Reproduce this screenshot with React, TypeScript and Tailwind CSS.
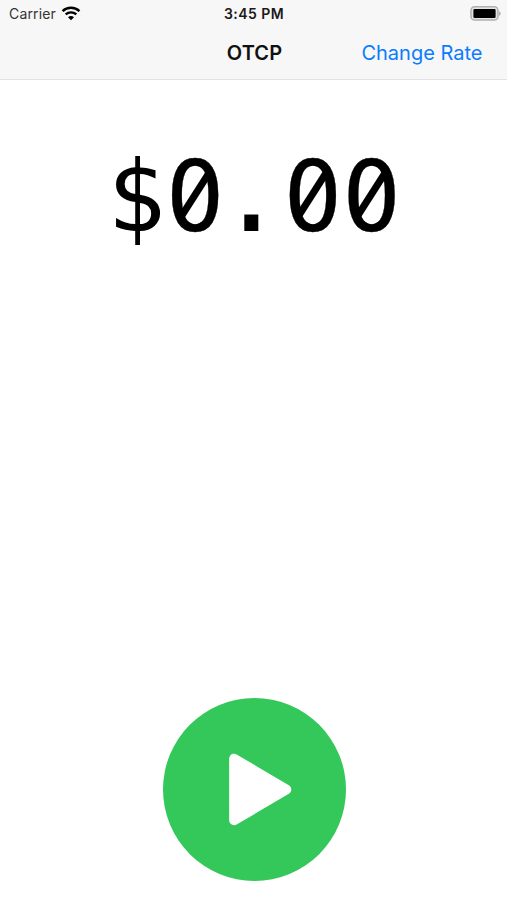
import React from 'react';

const WifiIcon: React.FC = () => (
  <svg width="20" height="15" viewBox="0 0 20 15" fill="none" className="ml-[5px]">
    <path d="M1.6 5.1C6.2.6 13.8.6 18.4 5.1" stroke="#000" strokeWidth="2.5" />
    <path d="M4.7 8.4C7.6 5.6 12.4 5.6 15.3 8.4" stroke="#000" strokeWidth="2.3" />
    <path d="M10 14.2L7 11.2C8.7 9.6 11.3 9.6 13 11.2Z" fill="#000" />
  </svg>
);

const BatteryIcon: React.FC = () => (
  <svg width="32" height="15" viewBox="0 0 32 15">
    <rect x="1" y="0.8" width="27" height="13.2" rx="3.6" fill="#e4e4e4" stroke="#b0b0b0" strokeWidth="1.5" />
    <rect x="3.4" y="2.9" width="22.2" height="9" rx="1.2" fill="#000" />
    <path d="M29 5.2C31.2 6 31.2 9 29 9.8Z" fill="#b0b0b0" />
  </svg>
);

// Zero with a diagonal slash through the counter
const Zero: React.FC = () => (
  <span className="relative [-webkit-text-stroke:0.3px_#000]">
    0
    <svg width="59" height="76" viewBox="0 0 59 76" className="absolute left-0 top-[18px]">
      <ellipse cx="29.3" cy="38" rx="9.5" ry="18" fill="#fff" />
      <path d="M15.2 58.5L43 15" stroke="#000" strokeWidth="7" />
    </svg>
  </span>
);

export default function App() {
  return (
    <div className="flex h-[900px] w-[507px] flex-col bg-white font-['Inter',sans-serif]">
      <header className="h-[80px] border-b border-[#e2e2e2] bg-[#f7f7f7]">
        <div className="grid h-[27px] grid-cols-3 items-center pl-[9px] pr-[6px] text-[14px]">
          <div className="flex items-center text-[#333]">
            <span className="tracking-[0.15px]">Carrier</span>
            <WifiIcon />
          </div>
          <span className="-ml-[2px] text-center font-semibold tracking-[0.45px] text-[#1a1a1a]">3:45 PM</span>
          <div className="-mr-px flex justify-end">
            <BatteryIcon />
          </div>
        </div>
        <div className="grid h-[51px] grid-cols-3 items-center px-[25px]">
          <span />
          <h1 className="ml-[2px] text-center text-[20px] font-semibold tracking-[0.1px] text-[#111]">OTCP</h1>
          <button className="-mr-[0.5px] justify-self-end whitespace-nowrap text-[20px] text-[#0a7cff]">Change Rate</button>
        </div>
      </header>

      <main className="flex flex-1 flex-col items-center justify-between pb-[19px] pt-[60px]">
        <div className="ml-px flex font-['DejaVu_Sans_Mono',monospace] text-[97.6px] leading-[114px] text-black">
          <span>$</span>
          <Zero />
          <span className="-ml-[2.5px] -mt-px mr-[2.5px] [-webkit-text-stroke:2px_#000]">.</span>
          <Zero />
          <Zero />
        </div>

        <button aria-label="Start" className="mb-[0.5px] ml-[2px] flex size-[183px] items-center justify-center rounded-full bg-[#34c759]">
          <svg width="183" height="183" viewBox="0 0 184 184">
            <path
              d="M71.5 61V123L124 92Z"
              fill="#fff"
              stroke="#fff"
              strokeWidth="10"
              strokeLinejoin="round"
            />
          </svg>
        </button>
      </main>
    </div>
  );
}
